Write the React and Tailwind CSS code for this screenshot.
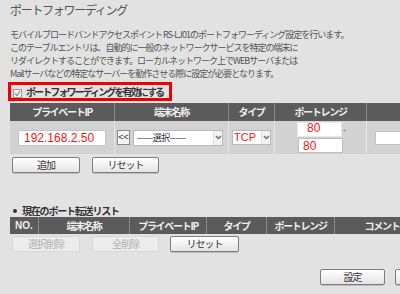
import React from "react";

const jp = { fontFamily: '"Noto Sans CJK JP", "Noto Sans", sans-serif' };
const latin = { fontFamily: '"Liberation Sans", Arial, sans-serif' };

const Btn = ({ children, className = "", disabled = false }) => (
  <button
    className={
      "h-[16px] rounded-[2px] text-[10px] leading-[14px] tracking-[-1px] flex items-center justify-center " +
      (disabled
        ? "border border-[#d8d8d8] bg-[#ececec] text-[#b0b0b0] "
        : "border border-[#7d7d7d] bg-gradient-to-b from-[#ffffff] to-[#e4e4e4] text-[#333] shadow-[0_1px_0_#bdbdbd] ") +
      className
    }
  >
    {children}
  </button>
);

const Chevron = () => (
  <span className="w-[9px] h-full flex items-center justify-center bg-[#f2f2f2] border-l border-[#e0e0e0]">
    <svg width="7" height="5" viewBox="0 0 7 5">
      <path d="M1 1 L3.5 3.5 L6 1" fill="none" stroke="#6a6a6a" strokeWidth="1.4" />
    </svg>
  </span>
);

export default function App() {
  return (
    <div className="w-[400px] h-[294px] overflow-hidden bg-[#e1e2e1] text-[#4a4a4a]" style={jp}>
      <div className="w-[460px] pl-[10px] pt-[2px]">
        <h1 className="text-[12px] leading-[16px] font-normal tracking-[-1.3px] text-[#555]">ポートフォワーディング</h1>

        <div className="mt-[10px] text-[9px] leading-[13px] text-[#555] tracking-[-1px]">
          <p>モバイルブロードバンドアクセスポイント RS-LJ01のポートフォワーディング設定を行います。</p>
          <p>このテーブルエントリは、自動的に一般のネットワークサービスを特定の端末に</p>
          <p>リダイレクトすることができます。ローカルネットワーク上でWEBサーバまたは</p>
          <p>Mailサーバなどの特定なサーバーを動作させる際に設定が必要となります。</p>
        </div>

        <div className="mt-[2px] -ml-[2px] w-[164px] h-[19px] border-[3px] border-[#f00000] flex items-end pl-[2px] overflow-hidden">
          <span className="w-[9px] h-[9px] border border-[#9a9a9a] bg-[#f4f4f4] flex items-center justify-center">
            <svg width="7" height="7" viewBox="0 0 7 7">
              <path d="M1 3.5 L3 5.5 L6 1" fill="none" stroke="#8a8a8a" strokeWidth="1.2" />
            </svg>
          </span>
          <span className="ml-[4px] text-[10px] leading-[13px] font-bold tracking-[-1.9px] text-[#333] whitespace-nowrap">
            ポートフォワーディングを有効にする
          </span>
        </div>

        {/* entry table */}
        <div className="mt-[2px] flex flex-col">
          <div className="flex h-[18px] bg-[#5b5b5b] text-[#eeeeee] text-[10px] font-bold leading-[18px] tracking-[-1.3px]">
            <div className="w-[105px] text-center border-r border-[#8a8a8a]">プライベートIP</div>
            <div className="w-[114px] text-center border-r border-[#8a8a8a]">端末名称</div>
            <div className="w-[46px] text-center border-r border-[#8a8a8a]">タイプ</div>
            <div className="w-[92px] text-center border-r border-[#8a8a8a]">ポートレンジ</div>
            <div className="flex-1"></div>
          </div>
          <div className="flex h-[33px] bg-[#d2d2d2]">
            <div className="w-[105px] border-r border-[#e6e6e6] flex items-center pl-[8px]">
              <div
                className="w-[88px] h-[16px] bg-white border border-[#c4c4c4] text-[#ff1010] text-[12px] leading-[14px] pl-[5px]"
                style={latin}
              >
                192.168.2.50
              </div>
            </div>
            <div className="w-[114px] border-r border-[#e6e6e6] flex items-center pl-[2px]">
              <span
                className="w-[13px] h-[15px] bg-[#f4f4f4] border border-[#8a8a8a] text-[9px] leading-[13px] text-[#333] flex items-center justify-center"
                style={latin}
              >
                &lt;&lt;
              </span>
              <div className="ml-[3px] w-[90px] h-[16px] bg-white border border-[#b8b8b8] flex items-stretch">
                <span className="flex-1 text-[9px] leading-[14px] text-[#333] pl-[3px] tracking-[-0.5px] whitespace-nowrap overflow-hidden">
                  ------選択------
                </span>
                <Chevron />
              </div>
            </div>
            <div className="w-[46px] border-r border-[#e6e6e6] flex items-center pl-[3px]">
              <div className="w-[39px] h-[15px] bg-white border border-[#b8b8b8] flex items-stretch">
                <span className="flex-1 text-[11px] leading-[13px] text-[#ff1010] pl-[1px]" style={latin}>
                  TCP
                </span>
                <Chevron />
              </div>
            </div>
            <div className="w-[92px] border-r border-[#e6e6e6] flex flex-col pl-[22px] pt-[1px] gap-[1px]">
              <div className="flex items-center">
                <div
                  className="w-[45px] h-[15px] bg-white border border-[#e8e8e8] text-[#ff1010] text-[12px] leading-[11px] pl-[9px]"
                  style={latin}
                >
                  80
                </div>
                <span className="ml-[1px] text-[9px] text-[#555]">-</span>
              </div>
              <div
                className="ml-[1px] w-[45px] h-[15px] bg-white border border-[#bdbdbd] text-[#ff1010] text-[12px] leading-[15px] pl-[4px]"
                style={latin}
              >
                80
              </div>
            </div>
            <div className="flex-1 flex items-center pl-[8px]">
              <div className="w-[60px] h-[14px] bg-white border border-[#c4c4c4]"></div>
            </div>
          </div>
        </div>

        <div className="mt-[3px] flex">
          <Btn className="ml-[2px] w-[68px]">追加</Btn>
          <Btn className="ml-[12px] w-[67px]">リセット</Btn>
        </div>

        {/* current list */}
        <div className="mt-[31px] flex items-center text-[10px] leading-[13px] font-bold tracking-[-1.2px] text-[#333]">
          <span className="ml-[3px] w-[4px] h-[4px] rounded-full bg-[#333]"></span>
          <span className="ml-[5px]">現在のポート転送リスト</span>
        </div>
        <div className="flex h-[17px] bg-[#5b5b5b] text-[#eeeeee] text-[10px] font-bold leading-[17px] tracking-[-1.3px]">
          <div className="w-[29px] pl-[5px] tracking-normal border-r border-[#8a8a8a]" style={latin}>NO.</div>
          <div className="w-[91px] text-center border-r border-[#8a8a8a]">端末名称</div>
          <div className="w-[77px] text-center border-r border-[#8a8a8a]">プライベートIP</div>
          <div className="w-[60px] text-center border-r border-[#8a8a8a]">タイプ</div>
          <div className="w-[68px] text-center border-r border-[#8a8a8a]">ポートレンジ</div>
          <div className="w-[94px] text-center">コメント</div>
        </div>
        <div className="mt-[2px] flex">
          <Btn disabled className="ml-[2px] w-[68px]">選択削除</Btn>
          <Btn disabled className="ml-[12px] w-[67px]">全削除</Btn>
          <Btn className="ml-[11px] w-[69px]">リセット</Btn>
        </div>

        <div className="mt-[17px] flex">
          <Btn className="ml-[310px] w-[68px]">設定</Btn>
          <Btn className="ml-[10px] w-[68px]"></Btn>
        </div>
      </div>
    </div>
  );
}
